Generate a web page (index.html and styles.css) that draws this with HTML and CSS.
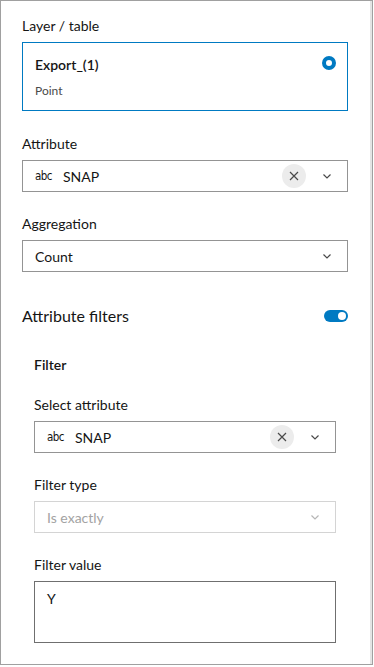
FILE: index.html
```html
<!DOCTYPE html>
<html lang="en">
<head>
  <meta charset="UTF-8">
  <meta name="viewport" content="width=device-width, initial-scale=1.0">
  <title>Attribute filters</title>
  <link rel="stylesheet" href="styles.css">
</head>
<body>
  <div class="panel">
    <!-- Layer -->
    <div class="field field-card">
      <div class="label">Layer / table</div>
      <div class="layer-card">
        <div class="layer-text">
          <div class="layer-title">Export_(1)</div>
          <div class="layer-sub">Point</div>
        </div>
        <svg class="radio" width="14" height="14" viewBox="0 0 14 14">
          <circle cx="7" cy="7" r="5" fill="none" stroke="#007ac2" stroke-width="4"/>
        </svg>
      </div>
    </div>

    <!-- Attribute -->
    <div class="field">
      <div class="label">Attribute</div>
      <div class="select">
        <span class="abc">abc</span>
        <span class="value">SNAP</span>
        <span class="clear">
          <svg width="10" height="10" viewBox="0 0 10 10"><path d="M1 1 9 9M9 1 1 9" stroke="#4a4a4a" stroke-width="1.2"/></svg>
        </span>
        <svg class="chevron" width="16" height="16" viewBox="0 0 16 16"><path d="M4.5 6.5 8 10l3.5-3.5" fill="none" stroke="#4a4a4a" stroke-width="1.2"/></svg>
      </div>
    </div>

    <!-- Aggregation -->
    <div class="field">
      <div class="label">Aggregation</div>
      <div class="select">
        <span class="value">Count</span>
        <svg class="chevron" width="16" height="16" viewBox="0 0 16 16"><path d="M4.5 6.5 8 10l3.5-3.5" fill="none" stroke="#4a4a4a" stroke-width="1.2"/></svg>
      </div>
    </div>

    <!-- Filters -->
    <div class="section-head">
      <span>Attribute filters</span>
      <span class="switch"><span class="knob"></span></span>
    </div>

    <div class="filter">
      <div class="filter-title">Filter</div>

      <div class="field">
        <div class="label">Select attribute</div>
        <div class="select">
          <span class="abc">abc</span>
          <span class="value">SNAP</span>
          <span class="clear">
            <svg width="10" height="10" viewBox="0 0 10 10"><path d="M1 1 9 9M9 1 1 9" stroke="#4a4a4a" stroke-width="1.2"/></svg>
          </span>
          <svg class="chevron" width="16" height="16" viewBox="0 0 16 16"><path d="M4.5 6.5 8 10l3.5-3.5" fill="none" stroke="#4a4a4a" stroke-width="1.2"/></svg>
        </div>
      </div>

      <div class="field">
        <div class="label">Filter type</div>
        <div class="select disabled">
          <span class="value">Is exactly</span>
          <svg class="chevron" width="16" height="16" viewBox="0 0 16 16"><path d="M4.5 6.5 8 10l3.5-3.5" fill="none" stroke="#4a4a4a" stroke-width="1.2"/></svg>
        </div>
      </div>

      <div class="field">
        <div class="label">Filter value</div>
        <div class="textarea">Y</div>
      </div>
    </div>
  </div>
</body>
</html>
```

FILE: styles.css
```css
:root {
  --text-1: #151515;
  --text-2: #4a4a4a;
  --brand: #007ac2;
  --border-input: #949494;
  --frame: #a0a0a0;
}
*, *::before, *::after { box-sizing: border-box; }
body {
  margin: 0;
  background: #fff;
  font-family: "Lato", "Noto Sans", sans-serif;
  color: var(--text-1);
}
.panel {
  width: 373px;
  height: 665px;
  border: 1px solid var(--frame);
  box-shadow: inset -2px 0 0 #e4e4e4;
  padding: 15px 24px 0 21px;
  overflow: hidden;
}
.field { margin-bottom: 22px; }
.field-card { margin-bottom: 23px; }
.label {
  font-size: 14px;
  line-height: 20px;
  margin-bottom: 6px;
}
.layer-card {
  display: flex;
  align-items: flex-start;
  border: 1px solid var(--brand);
  padding: 12px 11px 11px 12px;
}
.layer-text { flex: 1; }
.layer-title { font-size: 14px; line-height: 20px; font-weight: 600; margin-bottom: 8px; }
.layer-sub { font-size: 12px; line-height: 16px; color: var(--text-2); }
.radio { margin-top: 1px; }
.select {
  display: flex;
  align-items: center;
  height: 32px;
  border: 1px solid var(--border-input);
  padding: 0 12px;
  font-size: 14px;
}
.select .value { flex: 1; }
.abc {
  width: 16px;
  margin-right: 12px;
  font-family: "DejaVu Sans Condensed", sans-serif;
  font-size: 11.5px;
  letter-spacing: -0.6px;
}
.clear {
  width: 24px;
  height: 24px;
  border-radius: 50%;
  background: #ececec;
  display: flex;
  align-items: center;
  justify-content: center;
  margin-right: 13px;
}
.chevron { display: block; }
.select.disabled { border-color: #d4d4d4; color: #a3a3a3; }
.select.disabled .chevron { opacity: 0.4; }
.section-head {
  display: flex;
  align-items: center;
  justify-content: space-between;
  font-size: 16px;
  line-height: 24px;
  margin-top: 32px;
  margin-bottom: 27px;
}
.switch {
  width: 24px;
  height: 12px;
  border-radius: 6px;
  background: var(--brand);
  display: flex;
  align-items: center;
  justify-content: flex-end;
  padding: 0 2px;
}
.knob { width: 8px; height: 8px; border-radius: 50%; background: #fff; }
.filter { padding: 0 12px; }
.filter-title { font-size: 14px; line-height: 20px; font-weight: 600; margin-bottom: 20px; }
.textarea {
  height: 62px;
  border: 1px solid #6f6f6f;
  padding: 7px 12px;
  font-size: 14px;
  line-height: 20px;
}
```
